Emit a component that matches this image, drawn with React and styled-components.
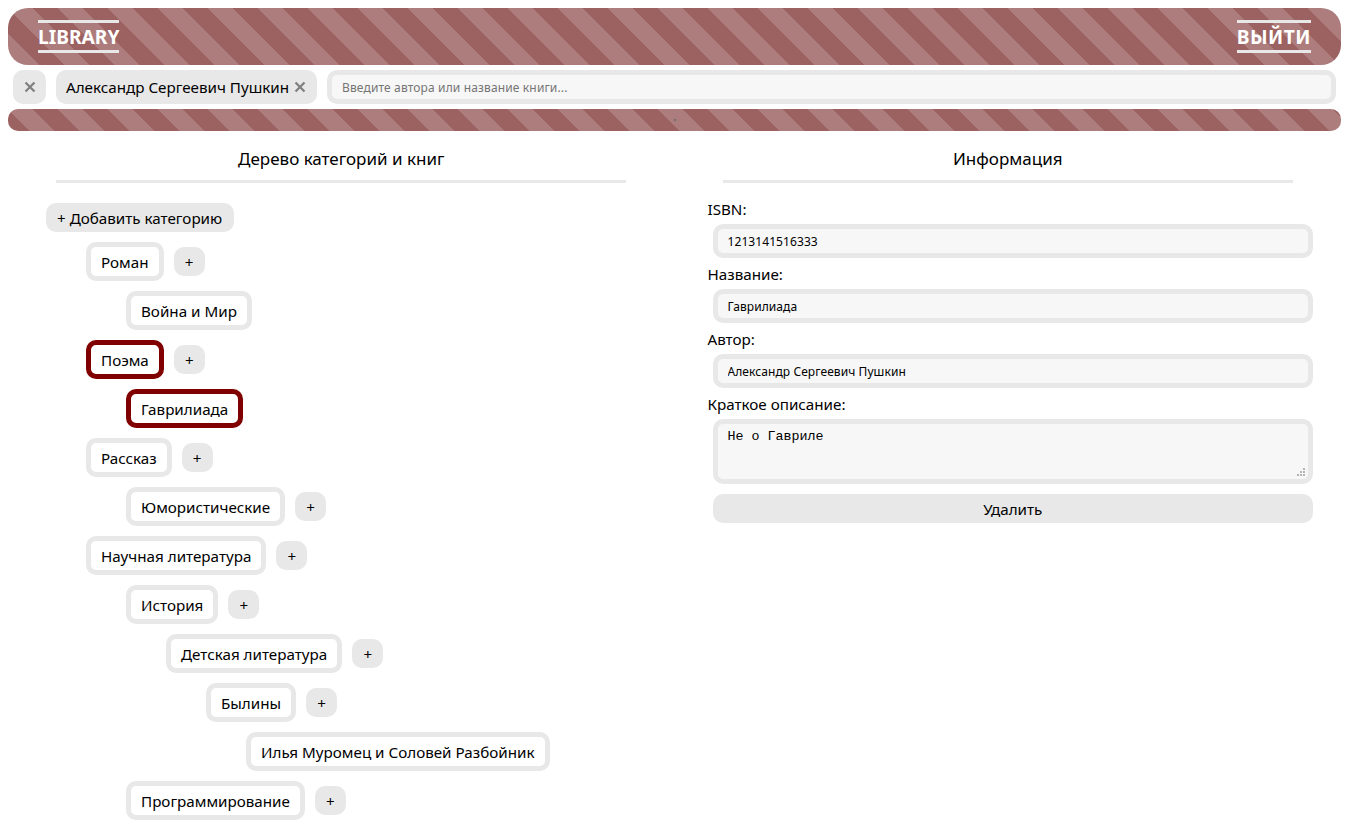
import React from "react";
import styled, { createGlobalStyle } from "styled-components";

const tree = [
  { name: "Роман", add: true, children: [{ name: "Война и Мир" }] },
  { name: "Поэма", add: true, active: true, children: [{ name: "Гаврилиада", active: true }] },
  { name: "Рассказ", add: true, children: [{ name: "Юмористические", add: true }] },
  {
    name: "Научная литература",
    add: true,
    children: [
      {
        name: "История",
        add: true,
        children: [
          {
            name: "Детская литература",
            add: true,
            children: [
              {
                name: "Былины",
                add: true,
                children: [{ name: "Илья Муромец и Соловей Разбойник" }],
              },
            ],
          },
        ],
      },
      { name: "Программирование", add: true },
    ],
  },
];

const Branch = ({ item }) => (
  <li>
    <Row>
      <Node $active={item.active}>{item.name}</Node>
      {item.add && <PlusButton>+</PlusButton>}
    </Row>
    {item.children && (
      <Tree>
        {item.children.map((child) => (
          <Branch key={child.name} item={child} />
        ))}
      </Tree>
    )}
  </li>
);

const App = () => {
  return (
    <>
      <GlobalStyle />
      <Header>
        <HeaderLink>LIBRARY</HeaderLink>
        <HeaderLink $spacing="0.5px">ВЫЙТИ</HeaderLink>
      </Header>
      <SearchBar>
        <ClearButton aria-label="Очистить">
          <Cross />
        </ClearButton>
        <Chip>
          Александр Сергеевич Пушкин
          <Cross />
        </Chip>
        <SearchInput placeholder="Введите автора или название книги..." />
      </SearchBar>
      <ThinBar>
        <Dot />
      </ThinBar>
      <Columns>
        <Column>
          <Title>Дерево категорий и книг</Title>
          <TreeArea>
            <AddCategory>+ Добавить категорию</AddCategory>
            <Tree>
              {tree.map((item) => (
                <Branch key={item.name} item={item} />
              ))}
            </Tree>
          </TreeArea>
        </Column>
        <Column>
          <Title>Информация</Title>
          <Form>
            <Label>ISBN:</Label>
            <Field defaultValue="1213141516333" />
            <Label>Название:</Label>
            <Field defaultValue="Гаврилиада" />
            <Label>Автор:</Label>
            <Field defaultValue="Александр Сергеевич Пушкин" />
            <Label>Краткое описание:</Label>
            <DescriptionBox>
              <Description defaultValue="Не о Гавриле" />
              <Grip viewBox="0 0 9 9">
                <path d="M6 0h2v2H6zM3 3h2v2H3zM6 3h2v2H6zM0 6h2v2H0zM3 6h2v2H3zM6 6h2v2H6z" />
              </Grip>
            </DescriptionBox>
            <DeleteButton>Удалить</DeleteButton>
          </Form>
        </Column>
      </Columns>
    </>
  );
};

const Cross = () => (
  <CrossIcon viewBox="0 0 12 12">
    <path d="M1.5 1.5 L10.5 10.5 M10.5 1.5 L1.5 10.5" />
  </CrossIcon>
);

export default App;

const GlobalStyle = createGlobalStyle`
  body {
    margin: 8px;
    background: #fff;
    color: #000;
    font-family: "Noto Sans", "Open Sans", sans-serif;
    font-size: 15.2px;
  }
`;

const stripes = `
  background-color: #9c6161;
  background-image: linear-gradient(
    45deg,
    rgba(255, 255, 255, 0.17) 25%,
    transparent 25%,
    transparent 50%,
    rgba(255, 255, 255, 0.17) 50%,
    rgba(255, 255, 255, 0.17) 75%,
    transparent 75%,
    transparent
  );
  background-size: 50px 50px;
`;

const Header = styled.header`
  ${stripes}
  height: 57px;
  border-radius: 20px;
  padding: 0 30px;
  display: flex;
  align-items: center;
  justify-content: space-between;
`;

const HeaderLink = styled.a`
  color: #fff;
  font-size: 19.2px;
  font-weight: 700;
  line-height: 26px;
  letter-spacing: ${(props) => props.$spacing || "0"};
  padding-top: 1px;
  border-top: 3px solid #e8e8e8;
  border-bottom: 3px solid #e8e8e8;
`;

const SearchBar = styled.div`
  display: flex;
  gap: 10px;
  padding: 5px;
  height: 34px;
`;

const ClearButton = styled.button`
  width: 33px;
  height: 34px;
  padding: 0;
  border: 0;
  border-radius: 10px;
  background: #e8e8e8;
  display: flex;
  align-items: center;
  justify-content: center;
`;

const CrossIcon = styled.svg`
  width: 12px;
  height: 12px;
  flex: none;
  fill: none;
  stroke: #7f7f7f;
  stroke-width: 2.2;
`;

const Chip = styled.div`
  width: 261px;
  height: 34px;
  box-sizing: border-box;
  padding: 0 11px 0 10px;
  border-radius: 10px;
  background: #e8e8e8;
  display: flex;
  align-items: center;
  justify-content: space-between;
  white-space: nowrap;
`;

const SearchInput = styled.input`
  flex: 1;
  min-width: 0;
  height: 34px;
  box-sizing: border-box;
  padding: 0 10px;
  border: 5px solid #e8e8e8;
  border-radius: 10px;
  background: #f7f7f7;
  outline: none;
  font: 12px "Noto Sans", sans-serif;

  &::placeholder {
    color: #757575;
    letter-spacing: 0.14px;
  }
`;

const ThinBar = styled.div`
  ${stripes}
  height: 22px;
  border-radius: 10px;
  display: flex;
  align-items: center;
  justify-content: center;
`;

const Dot = styled.span`
  width: 2px;
  height: 2px;
  background: #6e6e6e;
`;

const Columns = styled.main`
  display: grid;
  grid-template-columns: 1fr 1fr;
`;

const Column = styled.section`
  min-width: 0;
`;

const Title = styled.h2`
  width: 570px;
  height: 52px;
  box-sizing: border-box;
  margin: 0 auto;
  padding-top: 17px;
  border-bottom: 3px solid #e8e8e8;
  font-size: 17px;
  font-weight: 400;
  line-height: 22px;
  text-align: center;
`;

const TreeArea = styled.div`
  padding: 20px 0 0 38px;
`;

const AddCategory = styled.button`
  height: 29px;
  padding: 0 12px 0 11px;
  border: 0;
  border-radius: 10px;
  background: #e8e8e8;
  color: #000;
  font: inherit;
  display: block;
`;

const Tree = styled.ul`
  list-style: none;
  margin: 0;
  padding: 0 0 0 40px;
`;

const Row = styled.div`
  display: flex;
  align-items: center;
  gap: 10px;
  margin-top: 10px;
`;

const Node = styled.div`
  height: 39px;
  box-sizing: border-box;
  padding: 0 10px;
  border: 5px solid ${(props) => (props.$active ? "#800000" : "#e8e8e8")};
  border-radius: 10px;
  line-height: 30px;
  white-space: nowrap;
`;

const PlusButton = styled.button`
  width: 31px;
  height: 29px;
  padding: 0;
  border: 0;
  border-radius: 10px;
  background: #e8e8e8;
  color: #000;
  font: inherit;
`;

const Form = styled.form`
  padding: 10px 28px 0 33px;
  display: flex;
  flex-direction: column;
  align-items: flex-start;
`;

const Label = styled.label`
  line-height: 22px;
  margin-top: 5px;
  margin-bottom: 4px;
`;

const Field = styled.input`
  align-self: stretch;
  height: 34px;
  box-sizing: border-box;
  margin-left: 5px;
  padding: 0 10px;
  border: 5px solid #e8e8e8;
  border-radius: 10px;
  background: #f7f7f7;
  outline: none;
  font: 12px "Noto Sans", sans-serif;
  letter-spacing: 0.08px;
`;

const DescriptionBox = styled.div`
  position: relative;
  align-self: stretch;
  margin-left: 5px;
  height: 65px;
`;

const Description = styled.textarea`
  display: block;
  width: 100%;
  height: 100%;
  box-sizing: border-box;
  padding: 5px 10px;
  border: 5px solid #e8e8e8;
  border-radius: 10px;
  background: #f7f7f7;
  outline: none;
  resize: none;
  font: 13.33px "Liberation Mono", monospace;
`;

const Grip = styled.svg`
  position: absolute;
  right: 7px;
  bottom: 7px;
  width: 9px;
  height: 9px;
  fill: #b4b4b4;
`;

const DeleteButton = styled.button`
  align-self: stretch;
  height: 29px;
  margin: 10px 0 0 5px;
  border: 0;
  border-radius: 10px;
  background: #e8e8e8;
  color: #000;
  font: inherit;
`;
